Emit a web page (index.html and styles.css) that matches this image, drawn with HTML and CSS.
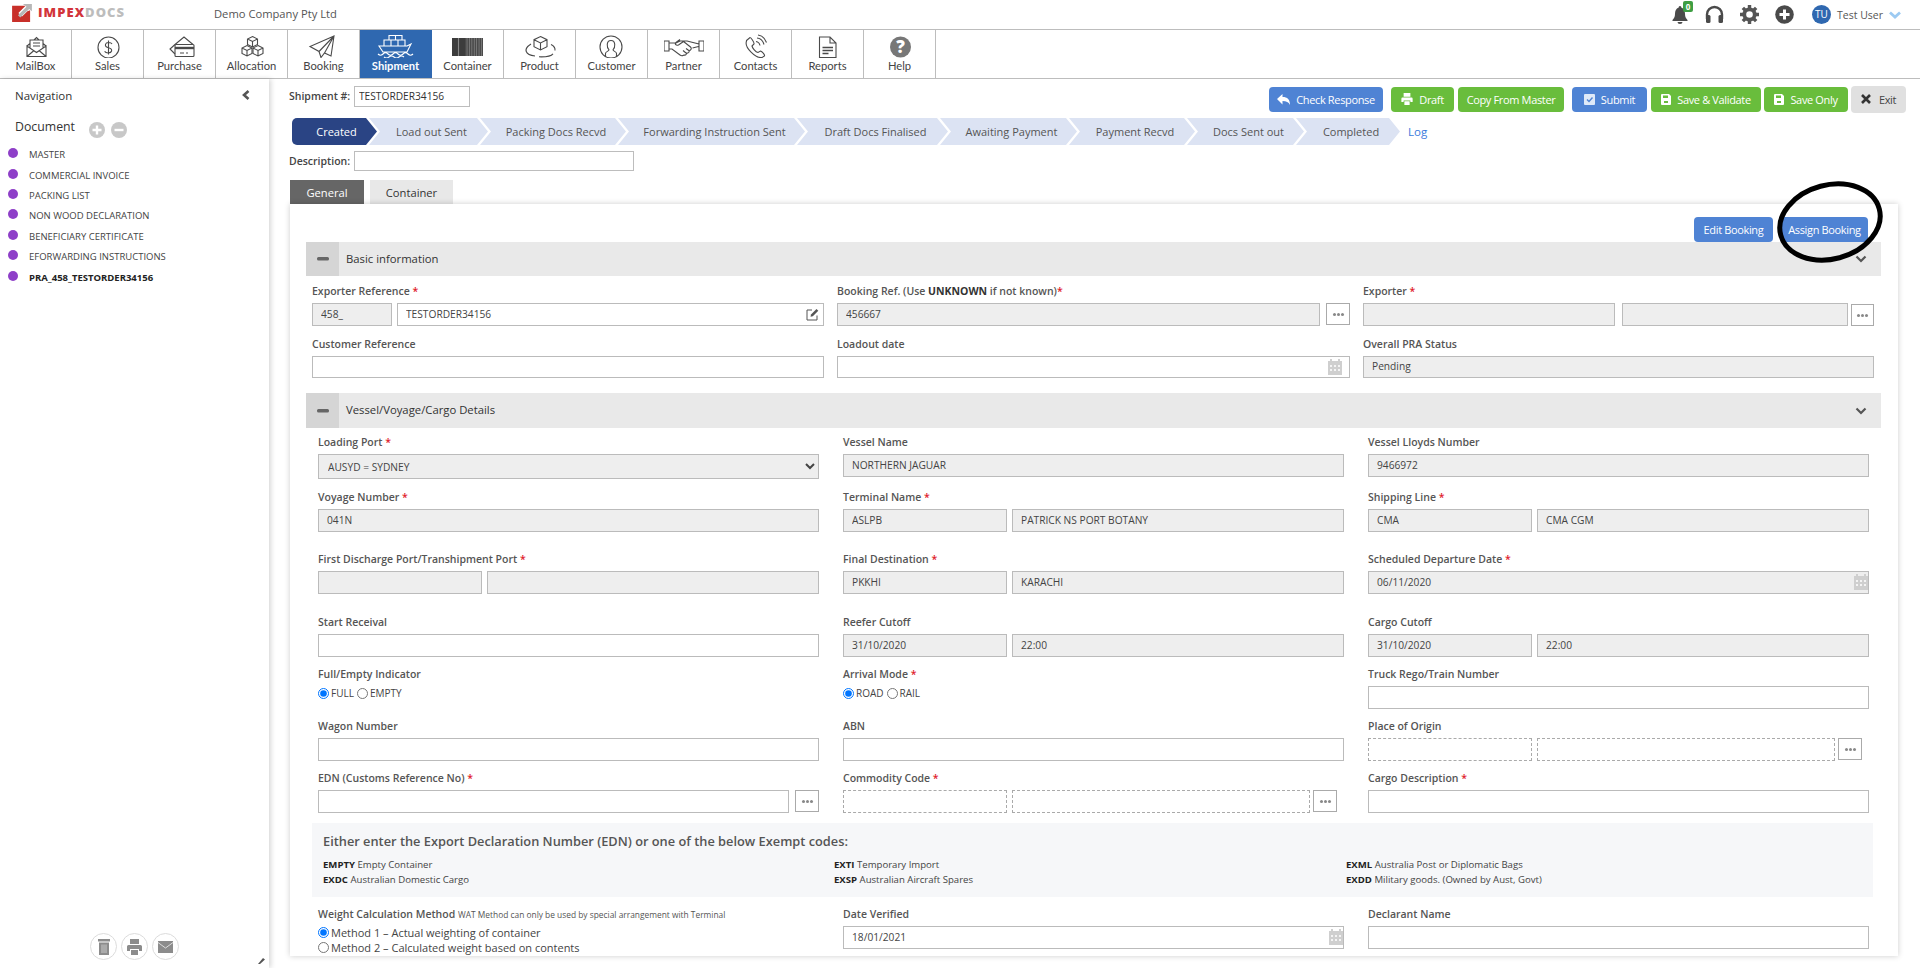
FILE: index.html
```html
<!DOCTYPE html>
<html lang="en">
<head>
<meta charset="utf-8">
<title>Shipment</title>
<link rel="stylesheet" href="styles.css">
</head>
<body>
<header class="topbar">
  <a class="logo">
    <svg class="logo-mark" viewBox="0 0 22 20"><path fill="#c8302a" d="M0 2h15L7 10l4 4 6-6 3-1v13H0z"/><path fill="#b7b7b7" d="M12 0h10v8l-3-2.500L9 15l-2.500-2.500L16 3z"/></svg>
    <span class="logo-a">IMPEX</span><span class="logo-b">DOCS</span>
  </a>
  <span class="company">Demo Company Pty Ltd</span>
  <div class="top-tools">
    <span class="bell">
      <svg width="16" height="20" viewBox="0 0 16 20"><path fill="#4a4a4a" d="M8 1a1.300 1.300 0 0 1 1.300 1.500C12 3.300 13 6 13 9c0 3 1 4.500 2.500 6v1H.5v-1C2 13.500 3 12 3 9c0-3 1-5.700 3.700-6.500A1.300 1.300 0 0 1 8 1zM5.500 17h5a2.500 2 0 0 1-5 0z"/></svg>
      <b class="badge">0</b>
    </span>
    <svg class="tool" width="19" height="19" viewBox="0 0 19 19"><path fill="none" stroke="#4a4a4a" stroke-width="2.400" d="M2 14V9.500a7.500 7.500 0 0 1 15 0V14"/><rect x="1" y="10" width="4.500" height="8" rx="1.500" fill="#4a4a4a"/><rect x="13.500" y="10" width="4.500" height="8" rx="1.500" fill="#4a4a4a"/></svg>
    <svg class="tool" width="19" height="19" viewBox="0 0 20 20"><circle cx="10" cy="10" r="5.500" fill="none" stroke="#555" stroke-width="4"/><path stroke="#555" stroke-width="3.600" d="M10 0v4M10 16v4M0 10h4M16 10h4M3 3l2.800 2.800M14.200 14.200 17 17M17 3l-2.800 2.800M5.800 14.200 3 17"/></svg>
    <svg class="tool" width="19" height="19" viewBox="0 0 19 19"><circle cx="9.500" cy="9.500" r="9.300" fill="#4a4a4a"/><path stroke="#fff" stroke-width="3" d="M9.500 4.500v10M4.500 9.500h10"/></svg>
    <span class="avatar">TU</span>
    <span class="user">Test User</span>
    <svg class="user-caret" width="12" height="8" viewBox="0 0 12 8"><path fill="none" stroke="#9ccaf2" stroke-width="2.800" d="M1 1.500 6 6l5-4.500"/></svg>
  </div>
</header>

<nav class="modules">
  <a class="mod"><svg class="mi" viewBox="0 0 40 24"><path d="M11 12l3-2.500M27 9.500l3 2.500M11 12v10.500h19V12l-9.500 6.500zM11 22.500l7-6M30 22.500l-7-6M14 13.500V6h13v7.500M18 6l2.500-2.500L23 6M17 9h7M17 12h7"/></svg><span>MailBox</span></a>
  <a class="mod"><svg class="mi" viewBox="0 0 40 24"><circle cx="20.500" cy="13.500" r="10.500"/><path d="M24 10c-1-2-5.800-2.200-6.500.3-.7 2.400 1.700 3 3.200 3.400s3.300 1 2.900 3.300c-.7 2.500-5.500 2.500-7 .4M20.500 6.500v14"/></svg><span>Sales</span></a>
  <a class="mod"><svg class="mi" viewBox="0 0 40 24"><path d="M15 10.500 24 3l9 7.500M15 10.500 10 15l5 5M20 19h4M26 19h2"/><rect x="15" y="10.500" width="19" height="12" rx="1"/><path stroke-width="2.400" d="M15 14h19"/></svg><span>Purchase</span></a>
  <a class="mod"><svg class="mi" viewBox="0 0 40 24"><path id="cube" d="M20.500 2.500l5 2.500v5.500l-5 2.500-5-2.500V5zM15.500 5l5 2.500L25.500 5M20.500 7.500V13"/><use href="#cube" x="-5.500" y="9"/><use href="#cube" x="5.500" y="9"/></svg><span>Allocation</span></a>
  <a class="mod"><svg class="mi" viewBox="0 0 40 24"><path d="M30 2 6 12.500l9 5 2 6 3.500-4.500 6.500 3zM30 2 15 17.500l2 6M30 2 20.500 19"/></svg><span>Booking</span></a>
  <a class="mod mod-on"><svg class="mi" viewBox="0 0 40 24"><path d="M13 6V1.500h6.500V6M19.500 1.500H26V6M8 12V6h7v6M15 6h7v6M22 6h7v6M3 12h28l4-2-4 8H7zM2 20q2.500 2.500 5 0t5 0 5 0 5 0 5 0 5 0 5 0M8 23q2.500 2 5 0t5 0 5 0 5 0"/></svg><b>Shipment</b></a>
  <a class="mod"><svg class="mi" viewBox="0 0 40 24"><rect class="solid" x="4" y="4" width="13" height="18"/><path class="cut" d="M10.500 4v18"/><rect class="stripe-bg" x="17" y="4" width="18" height="18"/><path class="stripes" d="M17 13h18"/></svg><span>Container</span></a>
  <a class="mod"><svg class="mi" viewBox="0 0 40 24"><path d="M20.500 2.500l6.500 3.200v7l-6.500 3.300-6.500-3.300v-7zM14 5.700l6.500 3.300L27 5.700M20.500 9v7M11 10C3 15 5 21 15 22M19 22.800c6 .2 12-.5 14-3M35 16.500c.3-2.500-1-4.500-4-6"/></svg><span>Product</span></a>
  <a class="mod"><svg class="mi" viewBox="0 0 40 24"><circle cx="19" cy="13" r="11"/><path d="M13.500 22v-2.500c0-2.200 3.500-2 3.500-3.700-2.300-2-3-9.300 2-9.300s4.300 7.300 2 9.300c0 1.700 3.500 1.500 3.500 3.700V22"/></svg><span>Customer</span></a>
  <a class="mod"><svg class="mi" viewBox="0 0 40 24"><path d="M0 7h5v10H0zM35 7h5v10h-5zM5 9h7l4-2h7l12 3M5 15h3l8 6c2 1.500 3 .5 4 0 2 .5 2.500-1 2.500-2 2 .5 3-1 2.500-2.500 2 0 3-2 1.500-3.500l-7-5.500-5 3.500c-2.500 1-4-1-2.500-2.500l4-3M28.500 14l6-1.500M19 16.500l3 2.500M22 14.500l3.500 2.500"/></svg><span>Partner</span></a>
  <a class="mod"><svg class="mi" viewBox="0 0 40 24"><path d="M10.500 6.500 14 3.500c1 0 4.500 5 4 6.500l-2 2c.5 2 3.500 6 6 6.500l2.500-1.500c1.500.5 4.500 3.500 4 5l-2.500 1.500c-6 1-18-10-15.500-16.500zM20 7.500c2 .3 3.500 1.500 4 4M21 4c3.500.3 6 3 7 6.500M22 1c4 .5 7 3.500 8.500 7.500"/></svg><span>Contacts</span></a>
  <a class="mod"><svg class="mi" viewBox="0 0 40 24"><path d="M11.500 3H22l6 6v14.500H11.500zM22 3v6h6"/><path stroke-width="1.600" d="M14.500 13.500H25M14.500 16.500H25M14.500 19.500h6"/></svg><span>Reports</span></a>
  <a class="mod mod-help"><svg class="mi" viewBox="0 0 40 24"><circle class="solid-help" cx="20.500" cy="13" r="10.500"/><text class="q" x="20.500" y="19">?</text></svg><span>Help</span></a>
</nav>

<div class="main">
  <aside class="side">
    <div class="side-head"><span>Navigation</span><svg width="8" height="10" viewBox="0 0 8 10"><path fill="none" stroke="#555" stroke-width="2.600" d="M6.500 1 2 5l4.500 4"/></svg></div>
    <div class="side-doc">
      <span>Document</span>
      <svg class="roundb" width="16" height="16" viewBox="0 0 16 16"><circle cx="8" cy="8" r="8" fill="#c8c8c8"/><path stroke="#fff" stroke-width="2.400" d="M8 3.500v9M3.500 8h9"/></svg>
      <svg class="roundb" width="16" height="16" viewBox="0 0 16 16"><circle cx="8" cy="8" r="8" fill="#c8c8c8"/><path stroke="#fff" stroke-width="2.400" d="M3.500 8h9"/></svg>
    </div>
    <ul class="docs">
      <li><i></i>MASTER</li>
      <li><i></i>COMMERCIAL INVOICE</li>
      <li><i></i>PACKING LIST</li>
      <li><i></i>NON WOOD DECLARATION</li>
      <li><i></i>BENEFICIARY CERTIFICATE</li>
      <li><i></i>EFORWARDING INSTRUCTIONS</li>
      <li class="cur"><i></i>PRA_458_TESTORDER34156</li>
    </ul>
    <div class="side-foot">
      <span class="fb"><svg width="12" height="16" viewBox="0 0 12 16"><path fill="#8c8c8c" d="M0 0h12v2.500H0zM1 3.500h10V16H1z"/><path stroke="#c9c9c9" d="M4 5.500v8.500M6 5.500v8.500M8 5.500v8.500"/></svg></span>
      <span class="fb"><svg width="15" height="16" viewBox="0 0 15 16"><path fill="#8c8c8c" d="M3 0h9v5H3zM1.500 6h12A1.500 1.500 0 0 1 15 7.500V12h-3v-2H3v2H0V7.500A1.500 1.500 0 0 1 1.500 6zM4 11h7v5H4z"/></svg></span>
      <span class="fb"><svg width="15" height="12" viewBox="0 0 15 12"><path fill="#8c8c8c" d="M0 0h15v12H0z"/><path fill="none" stroke="#ddd" d="M0 1.500 7.500 7 15 1.500"/></svg></span>
      <svg class="grip" width="7" height="7" viewBox="0 0 7 7"><path fill="#555" d="M0 7 5 1l2 1.500L2 7z"/></svg>
    </div>
  </aside>

  <section class="content">
    <div class="toolbar">
      <label class="sh-label sh-top">Shipment #:</label>
      <input class="sh-input" value="TESTORDER34156" readonly>
      <div class="actions">
        <a class="btn blue w-check"><svg width="13" height="11" viewBox="0 0 13 11"><path fill="#fff" d="M5.500 0v3c5 0 7.500 2.500 7.500 8-1.500-3-3.500-4-7.500-4v3.500L0 5z"/></svg>Check Response</a>
        <a class="btn green w-draft sep"><svg width="12" height="12" viewBox="0 0 15 16"><path fill="#fff" d="M3 0h9v5H3zM1.500 6h12A1.500 1.500 0 0 1 15 7.500V12h-3v-2H3v2H0V7.500A1.500 1.500 0 0 1 1.500 6zM4 11h7v5H4z"/></svg>Draft</a>
        <a class="btn green w-copy">Copy From Master</a>
        <a class="btn blue w-submit sep"><svg width="11" height="11" viewBox="0 0 11 11"><rect width="11" height="11" rx="1" fill="#dfe9f8"/><path fill="none" stroke="#4f83d4" stroke-width="1.400" d="m3 5.500 2 2 3.500-4"/></svg>Submit</a>
        <a class="btn green w-val"><svg width="10" height="11" viewBox="0 0 10 11"><path fill="#fff" d="M0 1a1 1 0 0 1 1-1h7l2 2v8a1 1 0 0 1-1 1H1a1 1 0 0 1-1-1z"/><path fill="#69bd3c" d="M2 1.500h5v2.500H2zM3 7h4v2H3z"/></svg>Save &amp; Validate</a>
        <a class="btn green w-save"><svg width="10" height="11" viewBox="0 0 10 11"><path fill="#fff" d="M0 1a1 1 0 0 1 1-1h7l2 2v8a1 1 0 0 1-1 1H1a1 1 0 0 1-1-1z"/><path fill="#69bd3c" d="M2 1.500h5v2.500H2zM3 7h4v2H3z"/></svg>Save Only</a>
        <a class="btn gray w-exit"><svg width="10" height="10" viewBox="0 0 10 10"><path stroke="#333" stroke-width="2.600" d="m1 1 8 8M9 1 1 9"/></svg>Exit</a>
      </div>
    </div>

    <div class="steps">
      <span class="step first s1">Created</span>
      <span class="step s2">Load out Sent</span>
      <span class="step s3">Packing Docs Recvd</span>
      <span class="step s4">Forwarding Instruction Sent</span>
      <span class="step s5">Draft Docs Finalised</span>
      <span class="step s6">Awaiting Payment</span>
      <span class="step s7">Payment Recvd</span>
      <span class="step s8">Docs Sent out</span>
      <span class="step s9">Completed</span>
      <a class="log">Log</a>
    </div>

    <div class="desc"><label class="sh-label">Description:</label><input class="desc-input" readonly></div>

    <div class="tabs"><a class="tab on">General</a><a class="tab off">Container</a></div>

    <div class="panel">
      <div class="panel-btns"><a class="btn blue w-edit">Edit Booking</a><a class="btn blue w-assign">Assign Booking</a></div>

      <div class="sec"><span class="sec-t"><svg width="12" height="4" viewBox="0 0 12 4"><rect width="12" height="3.500" rx="1.500" fill="#666"/></svg></span><span class="sec-n">Basic information</span><svg class="sec-c" width="12" height="8" viewBox="0 0 12 8"><path fill="none" stroke="#555" stroke-width="2.200" d="M1.500 1.500 6 6l4.500-4.500"/></svg></div>

      <div class="basic">
        <div class="r-a">
          <div class="f"><label>Exporter Reference <em>*</em></label>
            <div class="pair p-ref"><input class="ro" value="458_" readonly><div class="wrap"><input value="TESTORDER34156" readonly><svg class="over" width="13" height="13" viewBox="0 0 13 13"><path fill="none" stroke="#555" d="M11 7.500V12H1V2h5"/><path fill="#555" d="M5 6.500 10.500 1l1.800 1.800L6.800 8.300l-2.300.5z"/></svg></div></div></div>
          <div class="f"><label>Booking Ref. (Use <strong>UNKNOWN</strong> if not known)<em>*</em></label>
            <div class="pair"><input class="ro grow" value="456667" readonly><button class="dots" aria-label="More"></button></div></div>
          <div class="f"><label>Exporter <em>*</em></label>
            <div class="pair p-exp"><input class="ro" readonly><input class="ro" readonly><button class="dots" aria-label="More"></button></div></div>
        </div>
        <div class="r-b">
          <div class="f"><label>Customer Reference</label><input readonly></div>
          <div class="f f-date"><label>Loadout date</label><div class="wrap"><input readonly><svg class="over cal" width="14" height="16" viewBox="0 0 14 16"><use href="#calg"/></svg></div></div>
          <div class="f"><label>Overall PRA Status</label><input class="ro" value="Pending" readonly></div>
        </div>
      </div>

      <div class="sec sec2"><span class="sec-t"><svg width="12" height="4" viewBox="0 0 12 4"><rect width="12" height="3.500" rx="1.500" fill="#666"/></svg></span><span class="sec-n">Vessel/Voyage/Cargo Details</span><svg class="sec-c" width="12" height="8" viewBox="0 0 12 8"><path fill="none" stroke="#555" stroke-width="2.200" d="M1.500 1.500 6 6l4.500-4.500"/></svg></div>

      <div class="cargo">
        <div class="row h55">
          <div class="f"><label>Loading Port <em>*</em></label><select class="ro sel"><option>AUSYD = SYDNEY</option></select></div>
          <div class="f"><label>Vessel Name</label><input class="ro" value="NORTHERN JAGUAR" readonly></div>
          <div class="f"><label>Vessel Lloyds Number</label><input class="ro" value="9466972" readonly></div>
        </div>
        <div class="row h62">
          <div class="f"><label>Voyage Number <em>*</em></label><input class="ro" value="041N" readonly></div>
          <div class="f"><label>Terminal Name <em>*</em></label><div class="pair p2"><input class="ro" value="ASLPB" readonly><input class="ro" value="PATRICK NS PORT BOTANY" readonly></div></div>
          <div class="f"><label>Shipping Line <em>*</em></label><div class="pair p2"><input class="ro" value="CMA" readonly><input class="ro" value="CMA CGM" readonly></div></div>
        </div>
        <div class="row h63">
          <div class="f"><label>First Discharge Port/Transhipment Port <em>*</em></label><div class="pair p2"><input class="ro" readonly><input class="ro" readonly></div></div>
          <div class="f"><label>Final Destination <em>*</em></label><div class="pair p2"><input class="ro" value="PKKHI" readonly><input class="ro" value="KARACHI" readonly></div></div>
          <div class="f"><label>Scheduled Departure Date <em>*</em></label><div class="wrap"><input class="ro" value="06/11/2020" readonly><svg class="over cal" width="14" height="16" viewBox="0 0 14 16"><defs><g id="calg" fill="#cfcfcf"><path d="M2 0h2v2h6V0h2v2h2v14H0V2h2z"/><path fill="#f4f4f4" d="M2 6h2v2H2zM6 6h2v2H6zM10 6h2v2h-2zM2 10h2v2H2zM6 10h2v2H6zM10 10h2v2h-2z"/></g></defs><use href="#calg"/></svg></div></div>
        </div>
        <div class="row h52">
          <div class="f"><label>Start Receival</label><input readonly></div>
          <div class="f"><label>Reefer Cutoff</label><div class="pair p2"><input class="ro" value="31/10/2020" readonly><input class="ro" value="22:00" readonly></div></div>
          <div class="f"><label>Cargo Cutoff</label><div class="pair p2"><input class="ro" value="31/10/2020" readonly><input class="ro" value="22:00" readonly></div></div>
        </div>
        <div class="row h52">
          <div class="f"><label>Full/Empty Indicator</label><div class="radios"><input type="radio" name="fe" checked><span>FULL</span><input type="radio" name="fe"><span>EMPTY</span></div></div>
          <div class="f"><label>Arrival Mode <em>*</em></label><div class="radios"><input type="radio" name="am" checked><span>ROAD</span><input type="radio" name="am"><span>RAIL</span></div></div>
          <div class="f"><label>Truck Rego/Train Number</label><input readonly></div>
        </div>
        <div class="row h52">
          <div class="f"><label>Wagon Number</label><input readonly></div>
          <div class="f"><label>ABN</label><input readonly></div>
          <div class="f"><label>Place of Origin</label><div class="pair p3"><input class="dash" readonly><input class="dash" readonly><button class="dots" aria-label="More"></button></div></div>
        </div>
        <div class="row h52">
          <div class="f"><label>EDN (Customs Reference No) <em>*</em></label><div class="pair"><input class="grow" readonly><button class="dots" aria-label="More"></button></div></div>
          <div class="f"><label>Commodity Code <em>*</em></label><div class="pair p3"><input class="dash" readonly><input class="dash" readonly><button class="dots" aria-label="More"></button></div></div>
          <div class="f"><label>Cargo Description <em>*</em></label><input readonly></div>
        </div>

        <div class="exempt">
          <h4>Either enter the Export Declaration Number (EDN) or one of the below Exempt codes:</h4>
          <div class="codes">
            <p><b>EMPTY</b> Empty Container<br><b>EXDC</b> Australian Domestic Cargo</p>
            <p><b>EXTI</b> Temporary Import<br><b>EXSP</b> Australian Aircraft Spares</p>
            <p><b>EXML</b> Australia Post or Diplomatic Bags<br><b>EXDD</b> Military goods. (Owned by Aust, Govt)</p>
          </div>
        </div>

        <div class="row last">
          <div class="f"><label>Weight Calculation Method <small>WAT Method can only be used by special arrangement with Terminal</small></label>
            <div class="method"><input type="radio" name="wm" checked><span>Method 1 – Actual weighting of container</span></div>
            <div class="method"><input type="radio" name="wm"><span>Method 2 – Calculated weight based on contents</span></div></div>
          <div class="f"><label>Date Verified</label><div class="wrap"><input value="18/01/2021" readonly><svg class="over cal" width="14" height="16" viewBox="0 0 14 16"><use href="#calg"/></svg></div></div>
          <div class="f"><label>Declarant Name</label><input readonly></div>
        </div>
      </div>
    </div>
  </section>
</div>

<svg class="ring" width="120" height="92" viewBox="0 0 120 92"><ellipse cx="60" cy="46" rx="51" ry="37" fill="none" stroke="#000" stroke-width="5" transform="rotate(-15 60 46)"/></svg>
</body>
</html>
```

FILE: styles.css
```css
* { box-sizing: border-box; }
html, body { margin: 0; height: 968px; overflow: hidden; background: #fff; }
body { font-family: "Open Sans", "Liberation Sans", sans-serif; color: #444; font-size: 11px; position: relative; }
a { text-decoration: none; }

.topbar { height: 30px; border-bottom: 1px solid #bdbdbd; display: flex; align-items: center; padding-left: 12px; }
.logo { display: flex; align-items: center; width: 202px; height: 29px; }
.logo-mark { width: 20px; height: 18px; margin-right: 6px; margin-top: -3px; }
.logo-a, .logo-b { font-family: "Open Sans", sans-serif; font-weight: 800; font-size: 13px; letter-spacing: 1.05px; margin-top: -5px; }
.logo-a { color: #d2343a; }
.logo-b { color: #bdbdbd; }
.company { font-size: 11.200px; color: #555; margin-top: -3px; }
.top-tools { margin-left: auto; display: flex; align-items: center; padding-right: 19px; }
.bell { position: relative; width: 16px; height: 20px; margin-right: 17px; }
.badge { position: absolute; left: 11px; top: -4px; width: 10px; height: 11px; background: #3e9e43; color: #fff; border-radius: 2px; font-size: 8px; line-height: 11px; text-align: center; }
.tool { margin-right: 16px; }
.avatar { width: 19px; height: 19px; border-radius: 50%; background: #2f68b0; color: #fff; font-size: 10px; line-height: 18px; text-align: center; margin-left: 2px; margin-right: 6px; }
.user { font-size: 10.500px; color: #555; width: 52px; }
.user-caret { margin-left: 0; }

.modules { height: 49px; border-bottom: 1px solid #bdbdbd; display: flex; }
.mod { width: 72px; height: 48px; border-right: 1px solid #bdbdbd; display: flex; flex-direction: column; align-items: center; color: #444; font-family: Lato, "Open Sans", sans-serif; font-size: 11.200px; padding-top: 4px; }
.mod span, .mod b { display: block; line-height: 14px; margin-top: 1px; }
.mi { width: 40px; height: 24px; display: block; fill: none; stroke: #4a4a4a; stroke-width: 1.100; flex: none; }
.mod-on { background: #2f68b0; color: #fff; border-right-color: #2f68b0; }
.mod-on .mi { stroke: #fff; }
.solid { fill: #3c3c3c; stroke: none; }
.cut { stroke: #888; }
.stripe-bg { fill: #888; stroke: none; }
.stripes { stroke: #4a4a4a; stroke-width: 18px; stroke-dasharray: 1.700 .7; }
.solid-help { fill: #777; stroke: none; }
.q { fill: #fff; stroke: none; font-family: "Open Sans", sans-serif; font-weight: 800; font-size: 17px; text-anchor: middle; }

.main { display: flex; height: 889px; }
.side { width: 269px; flex: none; height: 889px; box-shadow: 2px 0 5px rgba(0,0,0,.16); display: flex; flex-direction: column; padding-left: 15px; position: relative; }
.side-head { height: 32px; display: flex; align-items: center; justify-content: space-between; font-size: 11.500px; color: #333; padding-right: 19px; }
.side-doc { height: 30px; display: flex; align-items: center; font-size: 12.300px; color: #333; }
.roundb { margin-top: 8px; margin-right: 6px; }
.roundb:first-of-type { margin-left: 14px; }
.docs { list-style: none; margin: 3.500px 0 0; padding: 0; font-size: 9.500px; color: #444; }
.docs li { display: flex; align-items: center; height: 20.400px; white-space: nowrap; }
.docs i { width: 10px; height: 10px; border-radius: 50%; background: #8e3fc8; margin-left: -7px; margin-right: 11px; margin-top: -3px; flex: none; }
.docs .cur { font-weight: 700; color: #222; }
.side-foot { margin-top: auto; height: 35px; display: flex; align-items: flex-start; padding-left: 75px; gap: 4px; }
.fb { width: 27px; height: 27px; border: 1px solid #dcdcdc; border-radius: 50%; display: flex; align-items: center; justify-content: center; }
.grip { position: absolute; right: 4px; bottom: 4px; }

.content { flex: 1; min-width: 0; padding: 7px 0 0 20px; }
.toolbar { display: flex; align-items: center; height: 27px; }
.sh-label { font-size: 10.500px; font-weight: 600; color: #444; width: 65px; flex: none; }
.sh-top { margin-top: -7px; }
.sh-input { width: 116px; height: 21px; border: 1px solid #bdbdbd; padding: 0 4px; font: 10.200px "Open Sans", sans-serif; color: #333; margin-top: -7px; outline: none; }
.actions { margin-left: auto; display: flex; gap: 4px; padding-right: 14px; }
.btn { height: 25px; border-radius: 4px; color: #fff; display: flex; align-items: center; justify-content: center; gap: 6px; font-size: 11px; letter-spacing: -.35px; white-space: nowrap; }
.blue { background: #4f83d4; }
.green { background: #69bd3c; }
.gray { background: #e0e0e0; color: #444; height: 27px; margin-top: -1px; gap: 8px; }
.sep { margin-left: 4px; }
.w-check { width: 114px; } .w-draft { width: 63px; } .w-copy { width: 106px; } .w-submit { width: 75px; }
.w-val { width: 110px; } .w-save { width: 84px; margin-left: -1px; } .w-exit { width: 55px; margin-left: -1px; }

.steps { display: flex; height: 27px; margin-top: 5px; margin-left: 3px; font-size: 11px; }
.step { height: 27px; background: #dce3f3; color: #555; display: flex; align-items: center; justify-content: center; padding-left: 6px; clip-path: polygon(0 0, calc(100% - 11px) 0, 100% 50%, calc(100% - 11px) 100%, 0 100%, 11px 50%); flex: none; margin-right: -8px; white-space: nowrap; }
.first { background: #2a4484; color: #fff; clip-path: polygon(0 0, calc(100% - 11px) 0, 100% 50%, calc(100% - 11px) 100%, 0 100%); border-radius: 5px 0 0 5px; position: relative; z-index: 1; padding-left: 4px; }
.s1 { width: 85px; } .s2 { width: 119px; } .s3 { width: 146px; } .s4 { width: 187px; } .s5 { width: 151px; }
.s6 { width: 137px; } .s7 { width: 126px; } .s8 { width: 117px; } .s9 { width: 104px; margin-right: 0; }
.log { color: #3a7bdc; font-size: 11.500px; align-self: center; margin-left: 8px; }

.desc { display: flex; align-items: center; margin-top: 6px; height: 20px; }
.desc-input { width: 280px; height: 20px; border: 1px solid #bdbdbd; outline: none; }

.tabs { display: flex; gap: 6px; height: 24px; margin-top: 9px; margin-left: 1px; }
.tab { display: flex; align-items: center; justify-content: center; font-size: 11.200px; }
.tab.on { width: 74px; background: #666; color: #fff; }
.tab.off { width: 83px; background: #e8e8e8; color: #333; }

.panel { margin-left: 1px; width: 1608px; height: 752px; overflow: hidden; box-shadow: 0 0 6px rgba(0,0,0,.2); padding: 13px 17px 0 16px; background: #fff; position: relative; }
.panel-btns { display: flex; justify-content: flex-end; gap: 8px; padding-right: 13px; height: 25px; }
.w-edit { width: 79px; } .w-assign { width: 87px; }
.sec { height: 34px; background: #e9e9e9; display: flex; align-items: center; font-size: 11.300px; color: #333; }
.sec-n { margin-top: -2px; }
.sec-t { width: 33px; height: 100%; background: #d5d5d5; display: flex; align-items: center; justify-content: center; margin-right: 7px; }
.sec-c { margin-left: auto; margin-right: 14px; }
.sec2 { height: 35px; margin-top: 15px; }

.basic { padding: 8px 8px 0 6px; }
.r-a, .r-b { display: grid; grid-template-columns: 512px 513px 511px; column-gap: 13px; }
.r-b { margin-top: 11px; }
.f label { display: block; height: 19px; line-height: 14px; font-size: 10.500px; font-weight: 600; color: #555; white-space: nowrap; }
.f label strong { font-weight: 700; color: #333; }
.f label em { color: #e0202a; font-style: normal; }
.f label small { font-size: 8.400px; font-weight: 400; }
.f input:not([type]), .f select { display: block; width: 100%; height: 23px; border: 1px solid #bbb; background: #fff; padding: 0 8px; font: 10.200px "Open Sans", sans-serif; color: #444; outline: none; border-radius: 0; min-width: 0; }
.f input:not([type]) { padding-bottom: 2px; }
.r-b .f input:not([type]) { height: 22px; }
.f input.ro, .f select.ro { background: #eee; }
.f input.dash { border: 1px dashed #aaa; }
.f select.sel { height: 25px; padding-left: 5px; }
.pair { display: flex; gap: 5px; align-items: flex-start; }
.pair input { flex: 1 1 0; }
.pair .grow { flex: 1 1 auto; }
.p-ref input.ro { flex: none; width: 80px; }
.p-ref .wrap { flex: 1; }
.p-exp { gap: 7px; }
.p-exp input:nth-child(1) { flex: none; width: 252px; }
.p2 input:first-child, .p3 input:first-child { flex: none; width: 164px; }
.wrap { position: relative; }
.over { position: absolute; right: 5px; top: 5px; }
.cal { top: 3px; right: 1px; }
.f-date .cal { right: 8px; }
.dots { width: 24px; height: 22px; flex: none; border: 1px solid #aaa; background: #fff; padding: 0; margin-left: 1px; display: flex; align-items: center; justify-content: center; }
.dots::before { content: ""; width: 3px; height: 3px; border-radius: 50%; background: #888; box-shadow: 4px 0 #888, -4px 0 #888; }
.p3 .dots { margin-left: -2px; }
.p3 { gap: 5px; padding-right: 7px; }
.p-exp .dots { margin-left: -4px; margin-top: 1px; width: 23px; }

.cargo { padding: 7px 12px 0 12px; width: 1575px; }
.row { display: grid; grid-template-columns: 501px 501px 501px; column-gap: 24px; }
.h55 { height: 55px; } .h62 { height: 62px; } .h63 { height: 63px; } .h52 { height: 52px; }
.radios { display: flex; align-items: center; height: 14px; font-size: 10px; color: #444; }
.radios input, .method input { width: 11px; height: 11px; margin: 0 2px 0 0; flex: none; }
.radios span { margin-right: 3px; }
.exempt { margin: 0 -4px 0 -6px; height: 74px; background: #f6f7f9; padding: 9px 11px 0; }
.exempt h4 { margin: 0; font-size: 12.800px; font-weight: 600; color: #555; line-height: 19px; }
.codes { display: grid; grid-template-columns: 511px 512px 1fr; margin-top: 6px; }
.codes p { margin: 0; font-size: 9.600px; line-height: 15px; color: #444; }
.codes b { color: #222; }
.last { margin-top: 10px; }
.method { display: flex; align-items: center; height: 15px; font-size: 11px; color: #444; }
.method:first-of-type { margin-top: -1px; }

.ring { position: absolute; left: 1770px; top: 176px; }
```
